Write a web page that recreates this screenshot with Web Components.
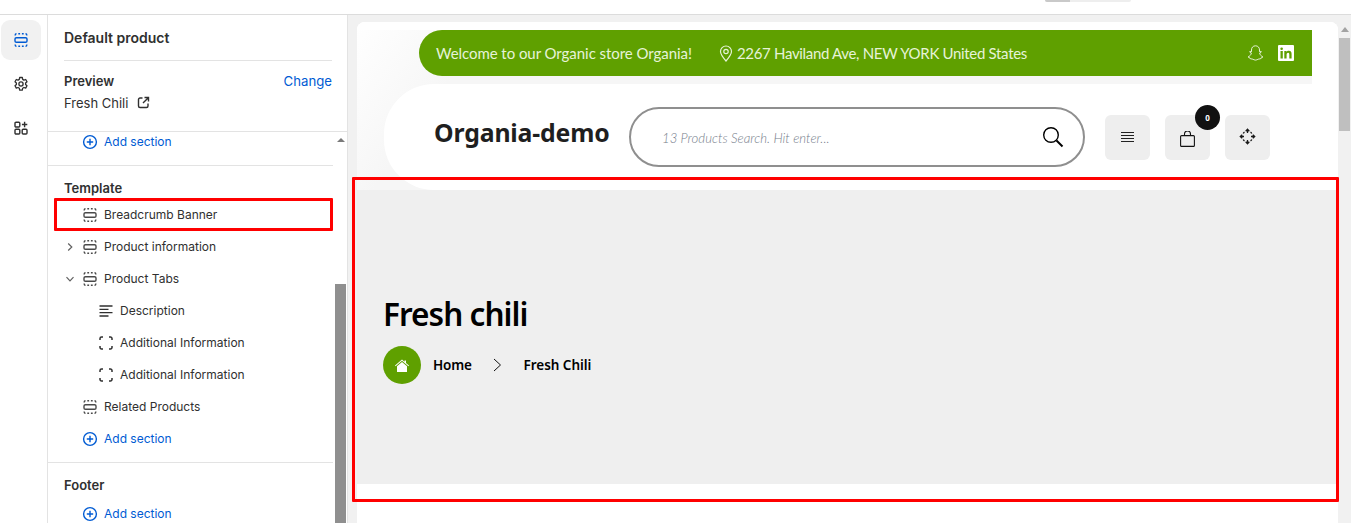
<!DOCTYPE html>
<html lang="en"><head><meta charset="utf-8"><title>Editor</title>
<style>
html,body{margin:0;padding:0;height:523px;overflow:hidden;background:#f1f1f1}
</style></head><body>
<editor-app></editor-app>
<script>
const I={
sections:(c,s=16)=>`<svg width="${s}" height="${s}" viewBox="0 0 16 16" fill="none" stroke="${c}" stroke-width="1.400"><rect x="2" y="5.700" width="12" height="4.600" rx="1.400"/><path d="M2.200 3.400V3c0-.8.5-1.300 1.300-1.300M5.300 1.700h1.800M8.900 1.700h1.800M12.500 1.700c.8 0 1.300.5 1.300 1.300v.4M2.200 12.600v.4c0 .8.5 1.300 1.300 1.300M5.300 14.300h1.800M8.900 14.300h1.800M12.500 14.300c.8 0 1.300-.5 1.300-1.300v-.4"/></svg>`,
gear:`<svg width="16" height="16" viewBox="0 0 16 16" fill="none" stroke="#303030" stroke-width="1.300" stroke-linejoin="round"><circle cx="8" cy="8" r="2.100"/><path d="M6.700 1.500h2.600l.4 1.900 1.200.7 1.800-.6 1.300 2.300-1.400 1.300v1.400l1.400 1.300-1.300 2.300-1.800-.6-1.200.7-.4 1.900H6.700l-.4-1.900-1.200-.7-1.800.6L2 9.800l1.400-1.300V7.100L2 5.800l1.300-2.300 1.800.6 1.200-.7z"/></svg>`,
apps:`<svg width="16" height="16" viewBox="0 0 16 16" fill="none" stroke="#303030" stroke-width="1.400"><rect x="2" y="2.200" width="4.800" height="4.800" rx="1"/><rect x="2" y="9.200" width="4.800" height="4.800" rx="1"/><rect x="9.200" y="9.200" width="4.800" height="4.800" rx="1"/><path d="M11.600 1.800v5.400M8.900 4.500h5.400"/></svg>`,
ext:`<svg width="13" height="13" viewBox="0 0 13 13" fill="none" stroke="#303030" stroke-width="1.400"><path d="M5.500 2H3a1.500 1.500 0 0 0-1.500 1.500V10A1.500 1.500 0 0 0 3 11.500h6.500A1.500 1.500 0 0 0 11 10V7.500M7.500 1.500h4v4M11.300 1.700 6 7"/></svg>`,
plus:`<svg width="16" height="16" viewBox="0 0 16 16" fill="none" stroke="#005bd3" stroke-width="1.400"><circle cx="8" cy="8" r="6.400"/><path d="M8 4.800v6.400M4.800 8h6.400"/></svg>`,
lines:`<svg width="16" height="16" viewBox="0 0 16 16" fill="none" stroke="#303030" stroke-width="1.300"><path d="M1.500 3h13M1.500 6.300h9M1.500 9.600h13M1.500 13h9"/></svg>`,
block:`<svg width="16" height="16" viewBox="0 0 16 16" fill="none" stroke="#303030" stroke-width="1.500"><path d="M2 5V3.500A1.500 1.500 0 0 1 3.500 2H5M11 2h1.500A1.500 1.500 0 0 1 14 3.500V5M14 11v1.500a1.500 1.500 0 0 1-1.500 1.500H11M5 14H3.500A1.500 1.500 0 0 1 2 12.500V11"/></svg>`,
right:`<svg width="10" height="10" viewBox="0 0 10 10" fill="none" stroke="#616161" stroke-width="1.200"><path d="M3.200 1.500 6.800 5 3.200 8.500"/></svg>`,
down:`<svg width="10" height="10" viewBox="0 0 10 10" fill="none" stroke="#616161" stroke-width="1.200"><path d="M1.500 3.200 5 6.800l3.500-3.600"/></svg>`
};
const def=(n,html)=>customElements.define(n,class extends HTMLElement{constructor(){super();this.attachShadow({mode:'open'}).innerHTML=typeof html==='function'?html(this):html}});

class TreeRow extends HTMLElement{
 connectedCallback(){
  if(this.shadowRoot)return;
  const r=this.attachShadow({mode:'open'});
  const ic=this.getAttribute('icon')||'sections',cv=this.getAttribute('chev');
  const icon=ic==='sections'?I.sections('#4a4a4a'):I[ic];
  const indent=+(this.getAttribute('indent')||14);
  r.innerHTML=`<style>:host{display:flex;align-items:center;height:32px;padding-left:${indent}px;font:400 12px/16px Inter,sans-serif;color:${ic==='plus'?'#005bd3':'#303030'}}
  .c{width:16px;height:16px;display:flex;align-items:center;justify-content:center;margin-right:4px}
  .i{width:16px;height:16px;margin-right:6px;display:flex}</style>
  <span class="c">${cv?I[cv]:''}</span><span class="i">${icon}</span><slot></slot>`;
 }
}
customElements.define('tree-row',TreeRow);

def('rail-nav',`<style>:host{display:flex;flex-direction:column;width:47px;background:#fff;border-right:1px solid #e3e3e3;align-items:flex-start;padding-top:5px}
 .b{width:40px;height:40px;margin-left:1px;margin-bottom:4px;border-radius:9px;display:flex;align-items:center;justify-content:center}
 .on{background:#f1f1f1}</style>
 <div class="b on">${I.sections('#005bd3')}</div><div class="b">${I.gear}</div><div class="b">${I.apps}</div>`);

def('side-panel',`<style>:host{display:flex;flex-direction:column;width:299px;background:#fff;border-right:1px solid #e3e3e3;font-family:Inter,sans-serif;color:#303030;overflow:hidden}
 .top{padding:0 15px 0 16px;height:116px;flex:none;border-bottom:1px solid #e3e3e3}
 .title{font-size:14px;font-weight:600;height:45px;line-height:46px;border-bottom:1px solid #e3e3e3}
 .pv{display:flex;justify-content:space-between;font-size:13px;line-height:16px;margin-top:12px}
 .pv b{font-weight:600}.pv a{color:#005bd3;font-size:13.200px}
 .fc{display:flex;align-items:center;gap:9px;font-size:13px;margin-top:6px;line-height:16px}
 .fc svg{display:block;margin-top:-2px}
 .wrap{flex:1;display:flex;min-height:0}
 .scroll{width:287px;flex:none;overflow:hidden}
 .sb{width:11px;display:flex;flex-direction:column;align-items:center}
 .arrow{width:0;height:0;border:4px solid transparent;border-top:0;border-bottom:4.500px solid #7a7a7a;margin-top:6px}
 .thumb{width:11px;background:#8f8f8f;margin-top:142px;flex:1}
 .sec{border-bottom:1px solid #e3e3e3;width:285px}
 .h{font-size:13px;font-weight:600;line-height:16px;padding-left:16px}
 .s0{height:33px;overflow:hidden}.s0 tree-row{margin-top:-6px}
 .s1{padding-top:14px;height:282px}.s1 .h{margin-bottom:3px}
 .s2{border:0;padding-top:14px}.s2 .h{margin-bottom:5px}
 </style>
 <div class="top"><div class="title">Default product</div>
 <div class="pv"><b>Preview</b><a>Change</a></div>
 <div class="fc">Fresh Chili ${I.ext}</div></div>
 <div class="wrap"><div class="scroll">
 <div class="sec s0"><tree-row icon="plus">Add section</tree-row></div>
 <div class="sec s1"><div class="h">Template</div>
  <tree-row>Breadcrumb Banner</tree-row>
  <tree-row chev="right">Product information</tree-row>
  <tree-row chev="down">Product Tabs</tree-row>
  <tree-row indent="30" icon="lines">Description</tree-row>
  <tree-row indent="30" icon="block">Additional Information</tree-row>
  <tree-row indent="30" icon="block">Additional Information</tree-row>
  <tree-row>Related Products</tree-row>
  <tree-row icon="plus">Add section</tree-row></div>
 <div class="sec s2"><div class="h">Footer</div><tree-row icon="plus">Add section</tree-row></div>
 </div><div class="sb"><div class="arrow"></div><div class="thumb"></div></div></div>`);

def('top-bar',`<style>:host{display:flex;align-items:center;height:46px;background:#5fa000;border-radius:23px 0 0 23px;margin-left:62px;margin-right:26px;padding:0 18px 0 17px;color:#e6f3d8;font:400 15px/46px Lato,sans-serif}
 .w{letter-spacing:-.05px}.pin{margin:0 4px 0 27px;display:flex}.sp{flex:1}.ad{letter-spacing:-.32px}
 .soc{display:flex;align-items:center;gap:14px}svg{display:block}</style>
 <span class="w">Welcome to our Organic store Organia!</span>
 <span class="pin"><svg width="14" height="17" viewBox="0 0 14 17" fill="none" stroke="#e6f3d8" stroke-width="1.200"><path d="M7 16C4 12.500 1.500 9.500 1.500 6.500a5.500 5.500 0 0 1 11 0C12.500 9.500 10 12.500 7 16z"/><circle cx="7" cy="6.500" r="2.200"/></svg></span>
 <span class="ad">2267 Haviland Ave, NEW YORK United States</span><span class="sp"></span>
 <span class="soc"><svg width="17" height="17" viewBox="0 0 17 17" fill="none" stroke="#f4f9ee" stroke-width=".9" stroke-linejoin="round"><path d="M8.500.8c2.600 0 4 1.900 4 4.200v1.700l1.400-.3c.6 0 .7.600.2.900l-1.500.9c.5 1.600 1.500 2.900 3.300 3.700-.3.700-1.100.9-2 1.100-.2.700-.4 1-1 .9-1.500-.2-2.300 1-4.400 1.200-2.100-.2-2.900-1.400-4.400-1.200-.6.100-.8-.2-1-.9-.9-.2-1.700-.4-2-1.100 1.800-.8 2.800-2.100 3.300-3.700l-1.500-.9c-.5-.3-.4-.9.200-.9l1.400.3V5c0-2.300 1.400-4.200 4-4.200z"/></svg>
 <svg width="16" height="16" viewBox="0 0 16 16"><rect width="16" height="16" rx="1" fill="#fff"/><path d="M2.500 6h2.300v7.500H2.500zM3.650 2.500a1.300 1.300 0 1 1 0 2.600 1.300 1.300 0 0 1 0-2.600zM6.300 6h2.200v1c.4-.7 1.200-1.200 2.300-1.200 2.300 0 2.800 1.500 2.800 3.500v4.200h-2.300V9.800c0-.9 0-2-1.200-2s-1.500 1-1.500 2v3.700H6.300z" fill="#5fa000"/></svg></span>`);

def('icon-tile',t=>`<style>:host{display:flex;width:45px;height:45px;background:#eee;border-radius:6px;align-items:center;justify-content:center;position:relative}
 .n{position:absolute;left:30px;top:-10px;width:25px;height:25px;border-radius:50%;background:#111;color:#fff;font:700 8px/25px "Noto Sans",sans-serif;text-align:center}</style><slot></slot>${t.hasAttribute('count')?`<span class="n">${t.getAttribute('count')}</span>`:''}`);

def('store-header',`<style>:host{display:flex;align-items:center;height:106px;margin:8px 26px 0 27px;background:#fff;border-radius:50px 0 0 50px;padding-left:50px;box-sizing:border-box}
 .logo{font:700 24.800px/30px "Noto Sans",sans-serif;letter-spacing:-.15px;color:#1f1f1f;width:195px;flex:none;margin-top:-11px;white-space:nowrap}
 .search{width:456px;height:60px;box-sizing:border-box;border:2px solid #8f8f8f;border-radius:30px;display:flex;align-items:center;justify-content:space-between;padding:0 19px 0 31px;font:italic 300 13.200px Lato,sans-serif;color:#77808c}
 .search span{margin-top:2px}
 .tiles{display:flex;gap:15px;margin-left:20px}svg{display:block}</style>
 <div class="logo">Organia-demo</div>
 <div class="search"><span>13 Products Search. Hit enter...</span>
 <svg width="22" height="22" viewBox="0 0 22 22" fill="none" stroke="#000"><circle cx="9" cy="9" r="7.300" stroke-width="1.400"/><path d="m14.500 14.500 6 6" stroke-width="2"/></svg></div>
 <div class="tiles">
 <icon-tile><svg width="13" height="11" viewBox="0 0 13 11" stroke="#222" stroke-width="1"><path d="M0 .5h13M0 3.500h13M0 6.500h13M0 9.500h13"/></svg></icon-tile>
 <icon-tile count="0"><svg style="margin-top:4px" width="15" height="16" viewBox="0 0 15 16" fill="none" stroke="#111" stroke-width="1.100"><rect x=".6" y="4.600" width="13.800" height="10.800" rx="1"/><path d="M4.500 4.600V3a3 3 0 0 1 6 0v1.600"/></svg></icon-tile>
 <icon-tile><svg style="margin-top:-2px" width="17" height="17" viewBox="0 0 17 17" fill="none" stroke="#1a1a1a" stroke-width="1.300"><path d="M8.500 1.500v3.500M8.500 12v3.500M1.500 8.500H5M12 8.500h3.500M6.700 3.200 8.500 1.300l1.800 1.900M6.700 13.800l1.800 1.900 1.800-1.900M3.200 6.700 1.300 8.500l1.900 1.800M13.800 6.700l1.900 1.800-1.900 1.800M5.500 4.200c-.6.300-1 .7-1.300 1.300M11.500 4.200c.6.300 1 .7 1.300 1.300M5.500 12.800c-.6-.3-1-.7-1.300-1.300M11.500 12.800c.6-.3 1-.7 1.300-1.300"/></svg></icon-tile>
 </div>`);

def('page-banner',`<style>:host{display:flex;flex-direction:column;height:294px;background:#efefef;padding:102px 0 0 26px;box-sizing:border-box;color:#000}
 h1{margin:0;font:600 31.500px/44px "Noto Sans",sans-serif;letter-spacing:-.95px}
 .c{display:flex;align-items:center;margin-top:10px;font:600 13.500px/20px "Noto Sans",sans-serif;letter-spacing:-.2px}
 .h{width:38px;height:38px;border-radius:50%;background:#5fa000;display:flex;align-items:center;justify-content:center;margin-right:12px}
 .s{margin:0 22px 0 21px;display:flex}.l{letter-spacing:-.05px}</style>
 <h1>Fresh chili</h1><div class="c"><span class="h"><svg width="14" height="13" viewBox="0 0 14 13" fill="#fff"><path d="M7 .5 0 6.500l.6.700L7 1.800l6.400 5.400.6-.7L11 4V1.500H9.500v1.200z"/><path d="M7 3 2 7.200V13h10V7.200z"/></svg></span><span>Home</span>
 <span class="s"><svg width="9" height="14" viewBox="0 0 9 14" fill="none" stroke="#111" stroke-width="1"><path d="m1 1 6.500 6L1 13"/></svg></span><span class="l">Fresh Chili</span></div>`);

def('store-preview',`<style>:host{display:block;width:981px;height:501px;margin:7px 0 0 9px;background:#fff;border-radius:8px 8px 0 0;overflow:hidden;flex:none}
 .head{padding-top:8px;background:linear-gradient(90deg,transparent 955px,#fff 955px),linear-gradient(#fff 8px,transparent 8px),linear-gradient(125deg,#fff 0,#f6f6f6 110px)}
 .w{height:212px;background:#fff}</style>
 <div class="head"><top-bar></top-bar><store-header></store-header></div><page-banner></page-banner><div class="w"></div>`);

def('page-scroll',`<style>:host{display:flex;flex-direction:column;align-items:center;width:13px;flex:none;background:#f1f1f1}
 .a{width:0;height:0;border:4px solid transparent;border-top:0;border-bottom:5px solid #a3a3a3;margin-top:12px}
 .t{width:11px;height:93px;background:#bfbfbf;margin-top:6px}</style><div class="a"></div><div class="t"></div>`);

def('annotation-box',t=>`<style>:host{position:absolute;display:block;box-sizing:border-box;border:3px solid #f00;border-radius:1px;pointer-events:none;left:${t.getAttribute('x')}px;top:${t.getAttribute('y')}px;width:${t.getAttribute('w')}px;height:${t.getAttribute('h')}px}</style>`);

def('editor-app',`<style>:host{display:flex;flex-direction:column;width:1351px;height:523px;position:relative;background:#f1f1f1;overflow:hidden}
 .bar{height:14px;background:#fff;border-bottom:1px solid #dcdcdc;flex:none;display:flex;justify-content:flex-end}
 .pill{width:86px;height:2px;background:#eee;border-radius:0 0 6px 6px;margin-right:220px;overflow:hidden}.pill i{display:block;width:25px;height:2px;background:#c9c9c9}
 .main{flex:1;display:flex;min-height:0}.pv{display:flex;flex:1;min-width:0}</style>
 <div class="bar"><div class="pill"><i></i></div></div>
 <div class="main"><rail-nav></rail-nav><side-panel></side-panel><div class="pv"><store-preview></store-preview><page-scroll></page-scroll></div></div>
 <annotation-box x="54" y="198" w="279" h="33"></annotation-box>
 <annotation-box x="352" y="177" w="987" h="325"></annotation-box>`);
</script>
</body></html>
